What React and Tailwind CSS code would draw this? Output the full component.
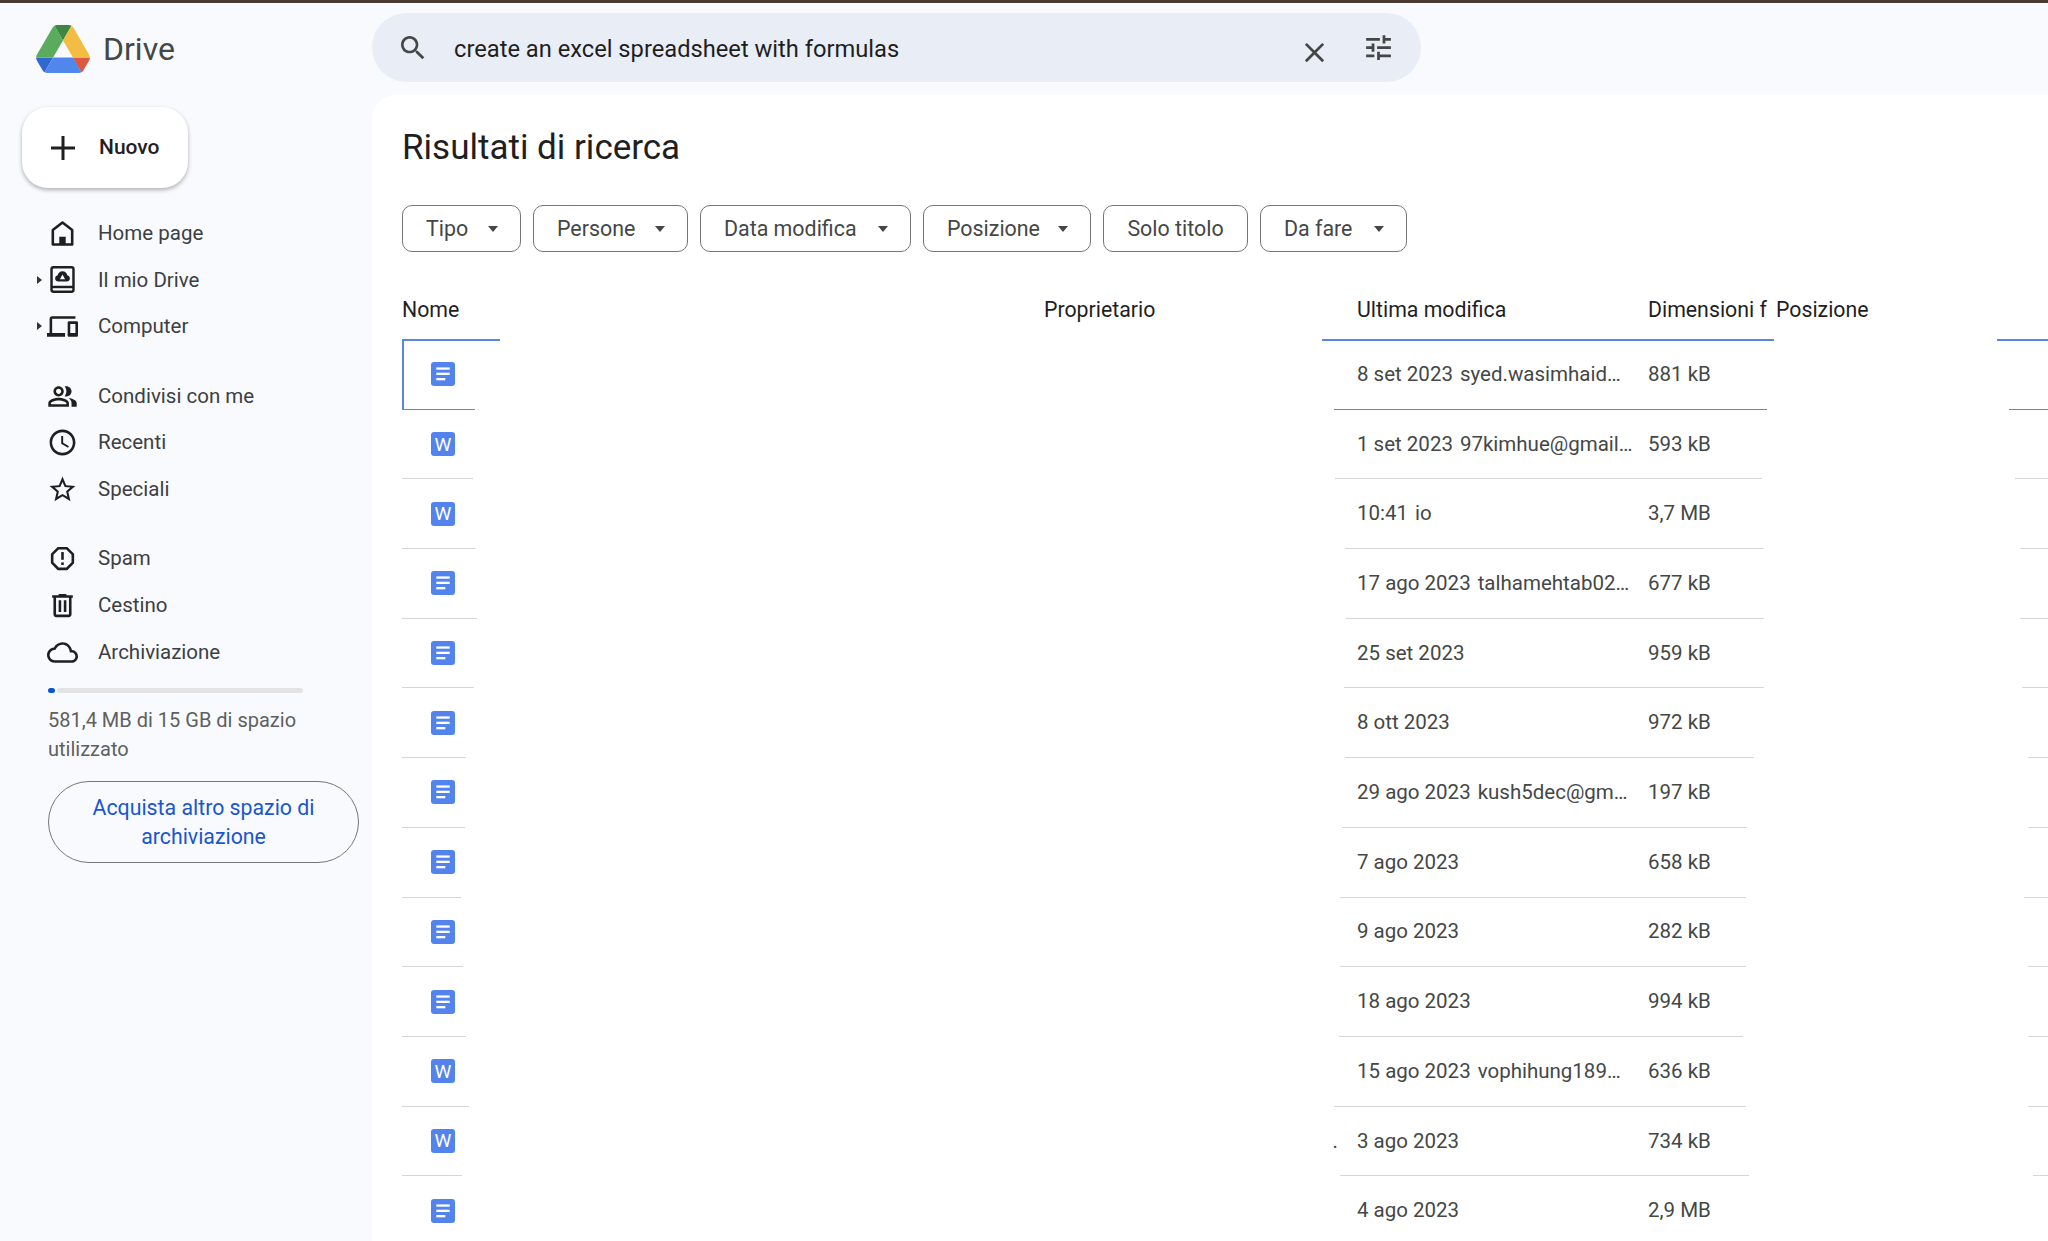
import React from 'react';

const Icon = ({ d, size = 31, className = '' }) => (
  <svg viewBox="0 0 24 24" width={size} height={size} fill="currentColor" className={className}>
    {d.map((p) => (
      <path key={p} d={p} />
    ))}
  </svg>
);

const paths = {
  devices: ['M4 6h18V4H4c-1.1 0-2 .9-2 2v11H0v3h14v-3H4V6zm19 2h-6c-.55 0-1 .45-1 1v10c0 .55.45 1 1 1h6c.55 0 1-.45 1-1V9c0-.55-.45-1-1-1zm-1 9h-4v-7h4v7z'],
  people: [
    'M16.67 13.13C18.04 14.06 19 15.32 19 17v3h4v-3c0-2.18-3.57-3.47-6.33-3.87z',
    'M15 12c2.21 0 4-1.79 4-4s-1.79-4-4-4c-.47 0-.91.1-1.33.24C14.5 5.27 15 6.58 15 8s-.5 2.73-1.33 3.76c.42.14.86.24 1.33.24z',
    'M9 12c2.21 0 4-1.79 4-4s-1.79-4-4-4-4 1.79-4 4 1.79 4 4 4zm0-6c1.1 0 2 .9 2 2s-.9 2-2 2-2-.9-2-2 .9-2 2-2z',
    'M9 13c-2.67 0-8 1.34-8 4v3h16v-3c0-2.66-5.33-4-8-4zm6 5H3v-.99C3.2 16.29 6.3 15 9 15s5.8 1.29 6 2v1z',
  ],
  clock: ['M11.99 2C6.47 2 2 6.48 2 12s4.47 10 9.99 10C17.52 22 22 17.52 22 12S17.52 2 11.99 2zM12 20c-4.42 0-8-3.58-8-8s3.58-8 8-8 8 3.58 8 8-3.58 8-8 8zm.5-13H11v6l5.25 3.15.75-1.23-4.5-2.67z'],
  star: ['M22 9.24l-7.19-.62L12 2 9.19 8.63 2 9.24l5.46 4.73L5.82 21 12 17.27 18.18 21l-1.63-7.03L22 9.24zM12 15.4l-3.76 2.27 1-4.28-3.32-2.88 4.38-.38L12 6.1l1.71 4.04 4.38.38-3.32 2.88 1 4.28L12 15.4z'],
  spam: [
    'M15.73 3H8.27L3 8.27v7.46L8.27 21h7.46L21 15.73V8.27L15.73 3zM19 14.9L14.9 19H9.1L5 14.9V9.1L9.1 5h5.8L19 9.1v5.8z',
    'M11 7h2v6h-2z',
    'M11 15h2v2h-2z',
  ],
  trash: ['M15 4V3H9v1H4v2h1v13c0 1.1.9 2 2 2h10c1.1 0 2-.9 2-2V6h1V4h-5zm2 15H7V6h10v13z', 'M9 8h2v9H9zm4 0h2v9h-2z'],
  cloud: ['M19.35 10.04C18.67 6.59 15.64 4 12 4 9.11 4 6.6 5.64 5.35 8.04 2.34 8.36 0 10.91 0 14c0 3.31 2.69 6 6 6h13c2.76 0 5-2.24 5-5 0-2.64-2.05-4.78-4.65-4.96zM19 18H6c-2.21 0-4-1.79-4-4 0-2.05 1.53-3.76 3.56-3.97l1.07-.11.5-.95C8.08 7.14 9.94 6 12 6c2.62 0 4.88 1.86 5.39 4.43l.3 1.5 1.53.11c1.56.1 2.78 1.41 2.78 2.96 0 1.65-1.35 3-3 3z'],
  search: ['M15.5 14h-.79l-.28-.27C15.41 12.59 16 11.11 16 9.5 16 5.91 13.09 3 9.5 3S3 5.91 3 9.5 5.91 16 9.5 16c1.61 0 3.09-.59 4.23-1.57l.27.28v.79l5 4.99L20.49 19l-4.99-5zm-6 0C7.01 14 5 11.99 5 9.5S7.01 5 9.5 5 14 7.01 14 9.5 11.99 14 9.5 14z'],
  close: ['M19 6.41L17.59 5 12 10.59 6.41 5 5 6.41 10.59 12 5 17.59 6.41 19 12 13.41 17.59 19 19 17.59 13.41 12z'],
  tune: ['M3 17v2h6v-2H3zM3 5v2h10V5H3zm10 16v-2h8v-2h-8v-2h-2v6h2zM7 9v2H3v2h4v2h2V9H7zm14 4v-2H11v2h10zm-6-4h2V7h4V5h-4V3h-2v6z'],
  plus: ['M20 13h-7v7h-2v-7H4v-2h7V4h2v7h7v2z'],
};

const HomeIcon = () => (
  <svg viewBox="0 0 24 24" width="31" height="31" fill="none" stroke="currentColor" strokeWidth="2" strokeLinejoin="round">
    <path d="M12 3.5 4.5 9.3V20.5h15V9.3z" />
    <path d="M9.5 20.5v-6h5v6z" fill="currentColor" stroke="none" />
  </svg>
);

const MyDriveIcon = () => (
  <svg viewBox="0 0 24 24" width="31" height="31" fill="none" stroke="currentColor" strokeWidth="1.9" strokeLinejoin="round">
    <rect x="3.5" y="2.5" width="17" height="19" rx="1.5" />
    <path d="M3.5 17.8h17" />
    <path d="M12 5.6c2 0 3.5 1.5 3.7 3.2 1.2.3 2 1.2 2 2.4 0 1.4-1.1 2.4-2.4 2.4H8.7c-1.3 0-2.4-1-2.4-2.4 0-1.2.8-2.1 2-2.4.2-1.7 1.7-3.2 3.7-3.2z" fill="currentColor" stroke="none" />
    <path d="m12 8.2 2 3.6h-4z" fill="#f8fafd" stroke="none" />
  </svg>
);

const DriveLogo = () => (
  <svg viewBox="0 0 87.3 78" width="54" height="48">
    <path d="m6.6 66.85 3.85 6.65c.8 1.4 1.95 2.5 3.3 3.3l13.75-23.8h-27.5c0 1.55.4 3.1 1.2 4.5z" fill="#3067d0" />
    <path d="m43.65 25-13.75-23.8c-1.35.8-2.5 1.9-3.3 3.3l-25.4 44a9.06 9.06 0 0 0 -1.2 4.5h27.5z" fill="#5aab5c" />
    <path d="m73.55 76.8c1.35-.8 2.5-1.9 3.3-3.3l1.6-2.75 7.65-13.25c.8-1.4 1.2-2.95 1.2-4.5h-27.502l5.852 11.5z" fill="#dd5840" />
    <path d="m43.65 25 13.75-23.8c-1.35-.8-2.9-1.2-4.5-1.2h-18.5c-1.6 0-3.15.45-4.5 1.2z" fill="#3c8741" />
    <path d="m59.8 53h-32.3l-13.75 23.8c1.35.8 2.9 1.2 4.5 1.2h50.8c1.6 0 3.15-.45 4.5-1.2z" fill="#5186ec" />
    <path d="m73.4 26.5-12.7-22c-.8-1.4-1.95-2.5-3.3-3.3l-13.75 23.8 16.15 28h27.45c0-1.55-.4-3.1-1.2-4.5z" fill="#f2bd42" />
  </svg>
);

const navGroups = [
  [
    { label: 'Home page', icon: <HomeIcon /> },
    { label: 'Il mio Drive', icon: <MyDriveIcon />, caret: true },
    { label: 'Computer', icon: <Icon d={paths.devices} />, caret: true },
  ],
  [
    { label: 'Condivisi con me', icon: <Icon d={paths.people} /> },
    { label: 'Recenti', icon: <Icon d={paths.clock} /> },
    { label: 'Speciali', icon: <Icon d={paths.star} /> },
  ],
  [
    { label: 'Spam', icon: <Icon d={paths.spam} /> },
    { label: 'Cestino', icon: <Icon d={paths.trash} /> },
    { label: 'Archiviazione', icon: <Icon d={paths.cloud} /> },
  ],
];

const chips = [
  { label: 'Tipo', width: 'w-[119px]' },
  { label: 'Persone', width: 'w-[155px]' },
  { label: 'Data modifica', width: 'w-[211px]' },
  { label: 'Posizione', width: 'w-[168px]' },
  { label: 'Solo titolo', width: 'w-[145px]', plain: true },
  { label: 'Da fare', width: 'w-[147px]' },
];

// each row: icon type, date, owner, size, then where its bottom line breaks up (left end, mid start, mid end, right start)
const rows = [
  { type: 'doc', date: '8 set 2023', owner: 'syed.wasimhaid…', size: '881 kB', line: [475, 1334, 1767, 2009] },
  { type: 'word', date: '1 set 2023', owner: '97kimhue@gmail…', size: '593 kB', line: [473, 1335, 1762, 2015] },
  { type: 'word', date: '10:41', owner: 'io', size: '3,7 MB', line: [476, 1345, 1764, 2020] },
  { type: 'doc', date: '17 ago 2023', owner: 'talhamehtab02…', size: '677 kB', line: [477, 1346, 1764, 2020] },
  { type: 'doc', date: '25 set 2023', owner: '', size: '959 kB', line: [474, 1344, 1764, 2022] },
  { type: 'doc', date: '8 ott 2023', owner: '', size: '972 kB', line: [466, 1345, 1754, 2028] },
  { type: 'doc', date: '29 ago 2023', owner: 'kush5dec@gm…', size: '197 kB', line: [465, 1342, 1747, 2028] },
  { type: 'doc', date: '7 ago 2023', owner: '', size: '658 kB', line: [461, 1340, 1746, 2024] },
  { type: 'doc', date: '9 ago 2023', owner: '', size: '282 kB', line: [463, 1340, 1746, 2028] },
  { type: 'doc', date: '18 ago 2023', owner: '', size: '994 kB', line: [466, 1339, 1743, 2028] },
  { type: 'word', date: '15 ago 2023', owner: 'vophihung189…', size: '636 kB', line: [469, 1334, 1746, 2028] },
  { type: 'word', date: '3 ago 2023', owner: '', size: '734 kB', line: [462, 1340, 1749, 2033], dot: true },
  { type: 'doc', date: '4 ago 2023', owner: '', size: '2,9 MB' },
];

const FileIcon = ({ type }) => (
  <div className="flex h-6 w-6 items-center justify-center rounded-[3px] bg-[#5383ec]">
    {type === 'word' ? (
      <span className="text-[19px] leading-none font-normal text-white">W</span>
    ) : (
      <svg viewBox="0 0 24 24" width="24" height="24" fill="#fff">
        <rect x="5.3" y="5.4" width="13.4" height="2.3" />
        <rect x="5.3" y="10.7" width="13.4" height="2.3" />
        <rect x="5.3" y="16" width="9" height="2.3" />
      </svg>
    )}
  </div>
);

const Rule = ({ line, blue, thick }) => {
  const [leftEnd, midStart, midEnd, rightStart] = line;
  const color = blue ? 'bg-[#5c86e4]' : 'bg-[#d6d6d6]';
  return (
    <div className={`flex ${thick ? 'h-[2px] -mb-px' : 'h-px'}`}>
      <div className={color} style={{ width: leftEnd - 402 }} />
      <div style={{ width: midStart - leftEnd }} />
      <div className={color} style={{ width: midEnd - midStart }} />
      <div style={{ width: rightStart - midEnd }} />
      <div className={`flex-1 ${color}`} />
    </div>
  );
};

export default function App() {
  return (
    <div className="flex h-screen w-full flex-col overflow-hidden bg-[#f8fafd] font-['Roboto',sans-serif] text-[#1f1f1f]">
      <div className="h-[3px] shrink-0 bg-[#4a3b32]" />
      <div className="flex min-h-0 flex-1">
        {/* Sidebar */}
        <aside className="w-[372px] shrink-0">
          <div className="flex h-[92px] items-center gap-[13px] pl-[36px]">
            <DriveLogo />
            <span className="text-[32px] text-[#444746]">Drive</span>
          </div>
          <button className="mt-[12px] ml-[22px] flex h-[81px] w-[166px] items-center gap-[18px] rounded-[26px] bg-white pl-[23px] shadow-[0_2px_4px_rgba(0,0,0,0.3)]">
            <Icon d={paths.plus} size={36} className="text-[#1f1f1f]" />
            <span className="text-[21px] font-medium">Nuovo</span>
          </button>

          <nav className="mt-[22px] flex flex-col gap-[23px]">
            {navGroups.map((group, i) => (
              <div key={i} className="flex flex-col">
                {group.map((item) => (
                  <div key={item.label} className="flex h-[46.6px] items-center text-[#1f1f1f]">
                    <div className="flex w-[47px] justify-end pr-[5px]">
                      {item.caret && (
                        <div className="h-0 w-0 border-y-[4.5px] border-l-[5px] border-y-transparent border-l-[#333]" />
                      )}
                    </div>
                    <div className="flex w-[31px] justify-center">{item.icon}</div>
                    <span className="ml-[20px] text-[20.5px] text-[#3c4043]">{item.label}</span>
                  </div>
                ))}
              </div>
            ))}
          </nav>

          <div className="pl-[48px]">
            <div className="mt-[13px] flex h-[5px] w-[255px] items-center gap-[2px]">
              <div className="h-[5px] w-[7px] rounded-full bg-[#0b57d0]" />
              <div className="h-[5px] flex-1 rounded-full bg-[#e3e3e3]" />
            </div>
            <p className="mt-[13px] w-[260px] text-[20px] leading-[29px] text-[#5f5f5f]">
              581,4 MB di 15 GB di spazio utilizzato
            </p>
            <button className="mt-[17px] h-[82px] w-[311px] rounded-full border border-[#747775] px-[30px] text-[21.3px] leading-[29px] text-[#1a56cf]">
              Acquista altro spazio di archiviazione
            </button>
          </div>
        </aside>

        {/* Main */}
        <main className="flex min-w-0 flex-1 flex-col">
          <div className="flex h-[92px] shrink-0 pt-[10px]">
            <div className="flex h-[69px] w-[1049px] items-center rounded-full bg-[#e9eef6] pl-[25px] text-[#444746]">
              <Icon d={paths.search} size={32} />
              <span className="ml-[25px] pt-[4px] text-[23.7px] text-[#1f1f1f]">create an excel spreadsheet with formulas</span>
              <Icon d={paths.close} size={33} className="mt-[10px] ml-auto" />
              <Icon d={paths.tune} size={33} className="mr-[26px] mb-[1px] ml-[31px]" />
            </div>
          </div>

          <div className="flex-1 overflow-hidden rounded-tl-[24px] bg-white pt-[31px] pl-[30px]">
            <h1 className="text-[35px] leading-[44px] font-normal">Risultati di ricerca</h1>

            <div className="mt-[35px] flex gap-[12px]">
              {chips.map((chip) => (
                <div
                  key={chip.label}
                  className={`flex h-[47px] items-center rounded-[10px] border border-[#747775] pl-[23px] text-[21.4px] text-[#444746] ${chip.width} ${chip.plain ? 'justify-center pr-[23px]' : 'justify-between pr-[21px]'}`}
                >
                  <span className="pt-[1px]">{chip.label}</span>
                  {!chip.plain && (
                    <div className="mr-[1px] h-0 w-0 border-x-[5.5px] border-t-[6px] border-x-transparent border-t-[#444746]" />
                  )}
                </div>
              ))}
            </div>

            <div className="grid h-[87px] grid-cols-[642px_313px_291px_128px_1fr] items-center pt-[29px] text-[21.3px] font-normal text-[#1f1f1f]">
              <div>Nome</div>
              <div>Proprietario</div>
              <div>Ultima modifica</div>
              <div className="whitespace-nowrap">Dimensioni f</div>
              <div>Posizione</div>
            </div>
            <Rule line={[500, 1322, 1774, 1997]} blue thick />

            {rows.map((row, i) => (
              <div key={i}>
                <div className="grid h-[68.7px] grid-cols-[955px_291px_1fr] items-center text-[20.5px] text-[#444746]">
                  <div className={`flex h-full items-center ${i === 0 ? 'border-l-2 border-[#5c86e4] pl-[27px]' : 'pl-[29px]'}`}>
                    <FileIcon type={row.type} />
                    {row.dot && <span className="ml-auto pr-[19px] leading-none">.</span>}
                  </div>
                  <div className="flex gap-[7px] whitespace-nowrap">
                    <span>{row.date}</span>
                    <span>{row.owner}</span>
                  </div>
                  <div>{row.size}</div>
                </div>
                {row.line && <Rule line={row.line} blue={i === 0} />}
              </div>
            ))}
          </div>
        </main>
      </div>
    </div>
  );
}
